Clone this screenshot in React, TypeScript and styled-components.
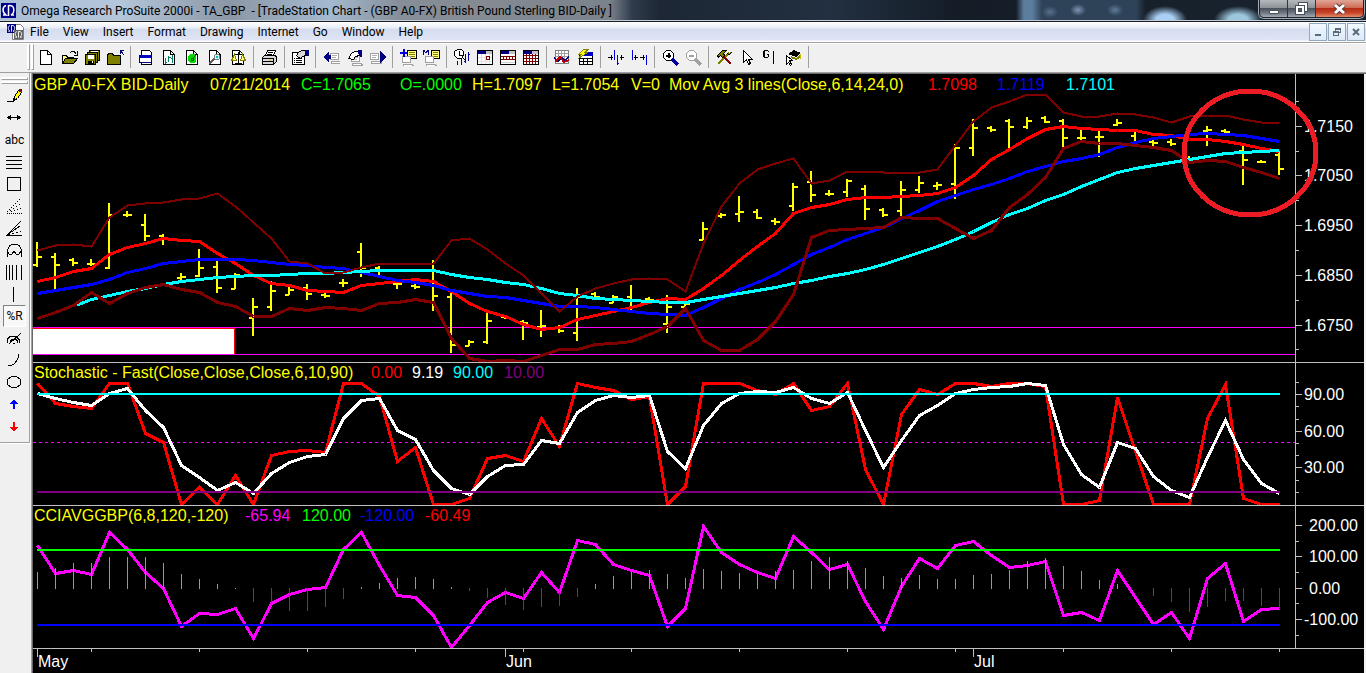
import React from "react";
import styled, { createGlobalStyle, css } from "styled-components";

const Global = createGlobalStyle`
  *, *::before, *::after { box-sizing: border-box; }
  body { margin: 0; background: #f0f0f0; }
`;

const UI_FONT = `Roboto, "Open Sans", sans-serif`;
const CHART_FONT = `"Liberation Sans", Arial, sans-serif`;

/* ---------- window frame ---------- */

const Frame = styled.div`
  display: flex;
  flex-direction: column;
  min-height: 100vh;
  font-family: ${UI_FONT};
  font-size: 12px;
  color: #000;
`;

const TitleBar = styled.header`
  display: flex;
  align-items: flex-start;
  height: 22px;
  padding: 0 2px 0 1px;
  border-bottom: 1px solid #1c2026;
  box-shadow: inset 0 -1px 0 #c3cbd6;
  background:
    radial-gradient(ellipse 22px 14px at 1165px 20px, #a9d0f4 40%, transparent 100%),
    radial-gradient(ellipse 24px 14px at 1238px 20px, #9cc6dc 40%, transparent 100%),
    radial-gradient(ellipse 8px 6px at 1078px 10px, #7d96b4, transparent),
    radial-gradient(ellipse 8px 6px at 1050px 12px, #56708c, transparent),
    radial-gradient(ellipse 8px 6px at 1115px 10px, #5f7a98, transparent),
    linear-gradient(90deg, transparent 1016px, #5d7d9f 1024px, #5d7d9f 1032px, #2f4358 1042px, #2f4358 1136px, transparent 1146px),
    linear-gradient(90deg, #a9bdd4 0, #b4c6da 120px, #8b97a6 230px, #a4bad0 330px, #868e98 400px, #858b93 480px, #7a828c 610px, #303c4c 632px, #1d2735 660px, #223041 830px, #141c26 960px, #1a2430 100%);
`;

const AppIcon = styled.svg`
  flex: none;
  margin: 3px 5px 0 0;
`;

const Title = styled.h1`
  flex: 1;
  margin: 0;
  font-size: 12px;
  font-weight: 400;
  line-height: 22px;
  white-space: pre;
  overflow: hidden;
`;

const WindowButtons = styled.div`
  display: flex;
  flex: none;
  height: 18px;
  border: 1px solid #20252c;
  border-top: 0;
  border-radius: 0 0 5px 5px;
  box-shadow: 0 0 0 1px rgba(220, 228, 236, 0.7);
  overflow: hidden;
`;

const WindowButton = styled.button<{ $close?: boolean }>`
  display: flex;
  align-items: center;
  justify-content: center;
  width: ${(p) => (p.$close ? 47 : 28)}px;
  padding: 0;
  border: 0;
  border-right: ${(p) => (p.$close ? "0" : "1px solid #30363e")};
  background: ${(p) =>
    p.$close
      ? "linear-gradient(#e0a697 0, #cf6b56 45%, #b32b13 50%, #c8452a 75%, #e48a6a 100%)"
      : "linear-gradient(#b5b9be 0, #8d939a 45%, #4b535d 50%, #6d7681 75%, #a3acb5 100%)"};
`;

const MenuBar = styled.nav`
  display: flex;
  align-items: center;
  height: 21px;
  padding: 0 1px 0 7px;
  border-bottom: 1px solid #a0a0a0;
  background: linear-gradient(#fff 0, #e9edf6 6px, #d5dcee 7px, #dfe5f5 18px, #fff 19px);
`;

const MenuList = styled.div`
  display: flex;
  flex: 1;
  gap: 2px;
`;

const MenuItem = styled.button`
  padding: 0 6px;
  border: 0;
  background: none;
  font: inherit;
  line-height: 18px;
`;

const ChildButtons = styled.div`
  display: flex;
  gap: 1px;
`;

const ChildButton = styled.button`
  display: flex;
  align-items: center;
  justify-content: center;
  width: 18px;
  height: 18px;
  padding: 0;
  border: 1px solid #93a8bd;
  background: linear-gradient(#f2f9ff, #dbe9f7);
`;

/* ---------- tool bars ---------- */

const ToolBar = styled.div`
  display: flex;
  align-items: center;
  height: 29px;
  padding: 0 0 2px 27px;
  border-top: 1px solid #fff;
  background: #f0f0f0;
`;

const grip = css`
  content: "";
  background: #fff;
  border: 1px solid #fff;
  border-right-color: #a0a0a0;
  border-bottom-color: #a0a0a0;
`;

const Grip = styled.div<{ $flat?: boolean }>`
  display: flex;
  flex: none;
  flex-direction: ${(p) => (p.$flat ? "column" : "row")};
  gap: 1px;
  width: ${(p) => (p.$flat ? 27 : 8)}px;
  height: ${(p) => (p.$flat ? 7 : 26)}px;
  &::before,
  &::after {
    ${grip}
    width: ${(p) => (p.$flat ? "27px" : "3px")};
    height: ${(p) => (p.$flat ? "3px" : "26px")};
  }
`;

const ToolGroup = styled.div`
  display: flex;
  align-items: center;
  height: 22px;
  margin-right: 4px;
  padding-right: 3px;
  border-right: 1px solid #a0a0a0;
`;

const ToolButton = styled.button`
  display: flex;
  align-items: center;
  justify-content: center;
  width: 23px;
  height: 22px;
  padding: 0;
  border: 0;
  background: none;
`;

const Body = styled.div`
  display: flex;
  flex: 1;
  border-top: 1px solid #a0a0a0;
`;

const Side = styled.aside`
  flex: none;
  width: 32px;
  border-right: 1px solid #a0a0a0;
`;

const SideTools = styled.div`
  display: flex;
  flex-direction: column;
  margin-right: 1px;
  padding: 4px 1px 5px;
  border-right: 1px solid #a0a0a0;
  border-bottom: 1px solid #a0a0a0;
  box-shadow: 1px 1px 0 #fff;
`;

const SideButton = styled.button<{ $pressed?: boolean }>`
  display: flex;
  align-items: center;
  justify-content: center;
  width: 23px;
  height: 22px;
  margin-left: 2px;
  padding: 0;
  border: 1px solid transparent;
  background: none;
  font-family: ${UI_FONT};
  font-size: 12px;
  line-height: 12px;
  ${(p) =>
    p.$pressed &&
    css`
      border-color: #808080 #fff #fff #808080;
      background: #f8f8f8;
    `}
`;

const SideList = styled.div`
  display: flex;
  flex-direction: column;
  margin-top: 1px;
`;

/* ---------- chart ---------- */

const Chart = styled.main`
  flex: 1;
  min-width: 0;
  border: 1px solid #696969;
  border-width: 1px 0 0 1px;
  background: #000;
  box-shadow: inset -2px 0 0 #f4f4f4;
  padding-right: 2px;
  font-family: ${CHART_FONT};
  font-size: 16px;
`;

const Panel = styled.section<{ $height: number }>`
  position: relative;
  display: grid;
  grid-template-columns: minmax(0, 1fr) 69px;
  height: ${(p) => p.$height}px;
  border-bottom: 1px solid #c0c0c0;
`;

const Plot = styled.svg`
  grid-area: 1 / 1;
  display: block;
  width: 100%;
  height: 100%;
  shape-rendering: crispEdges;
  polyline, path, line { vector-effect: non-scaling-stroke; }
`;

const Axis = styled.svg`
  grid-area: 1 / 2;
  display: block;
  width: 69px;
  height: 100%;
  text { fill: #fff; }
  path { stroke: #c0c0c0; fill: none; shape-rendering: crispEdges; }
`;

const Legend = styled.div<{ $columns: string; $tall?: boolean }>`
  grid-area: 1 / 1;
  z-index: 1;
  display: grid;
  grid-template-columns: ${(p) => p.$columns};
  align-self: start;
  padding-left: 1px;
  line-height: ${(p) => (p.$tall ? 22 : 20)}px;
  white-space: nowrap;
`;

const LegendItem = styled.span<{ $color: string }>`
  color: ${(p) => p.$color};
`;

const Marker = styled.svg`
  position: absolute;
  top: 13px;
  right: 45px;
  z-index: 2;
`;

const TimePanel = styled.div`
  display: grid;
  grid-template-columns: minmax(0, 1fr) 69px;
`;

const TimeAxis = styled.div`
  position: relative;
  height: 24px;
`;

const TimeTicks = styled.svg`
  position: absolute;
  inset: 0;
  width: 100%;
  height: 24px;
  shape-rendering: crispEdges;
`;

const Months = styled.div`
  display: grid;
  grid-template-columns: 468fr 468fr 321fr;
  padding: 2px 0 0 5px;
  color: #fff;
  line-height: 22px;
`;

/* ---------- data ---------- */

const STEP = 18;
const FIRST = 37;
const barX = (i: number) => FIRST + STEP * i;
const points = (ys: number[], start = 0) =>
  ys.map((y, i) => `${barX(i + start) + 0.5},${y + 0.5}`).join(" ");

const upper = [250,245,244,246,217,205,203,202,199,198,193,206,222,238,261,263,273,272,267,263,263,263,263,240,238,249,263,275,293,311,296,288,283,279,278,279,291,243,206,183,169,163,158,183,180,171,171,172,172,172,169,145,121,107,101,94,94,112,116,116,113,114,117,122,116,115,115,119,122,123];
const lower = [318,312,305,292,303,293,287,284,289,292,302,306,316,316,308,310,307,308,310,303,302,299,302,338,358,361,360,361,355,349,349,344,343,341,334,326,308,340,350,350,339,321,294,237,230,229,228,227,217,218,218,228,238,230,207,194,177,148,141,143,143,145,147,150,162,160,161,167,172,178];
const fast = [281,277,271,268,254,247,243,238,240,241,253,263,275,283,285,290,291,292,285,283,281,279,281,291,303,311,316,324,329,327,319,315,311,307,302,298,299,288,275,260,246,233,213,207,204,199,197,197,196,195,193,187,175,159,149,138,129,126,128,129,130,130,134,135,139,139,141,144,148,151];
const medium = [293,290,287,284,279,272,268,263,261,259,259,259,260,262,264,265,267,268,272,276,280,282,285,290,293,296,297,300,303,306,306,307,309,311,313,314,315,307,298,289,282,274,264,254,247,239,233,227,218,210,201,195,189,184,178,171,166,161,158,154,147,142,138,136,134,133,134,135,138,141];
const slow = [299,295,291,288,284,281,279,277,276,275,275,274,273,273,272,271,270,270,270,270,274,277,279,282,284,288,293,295,298,299,300,301,302,302,299,296,293,290,287,283,280,276,273,269,264,258,252,246,239,231,222,214,208,200,194,186,179,172,168,165,162,159,156,153,152,151,150];

/* high, low, open, close */
const bars: [number, number, number, number][] = [
  [242,267,264,256],[253,289,256,264],[258,266,259,262],[259,266,263,263],[203,269,267,214],[211,217,214,214],[214,241,224,235],[234,245,235,237],
  [273,280,277,276],[249,277,275,267],[260,293,266,287],[273,289,288,274],[298,336,317,306],[281,311,306,290],[287,295,294,289],[284,300,287,293],
  [291,298,294,295],[279,287,282,282],[243,277,251,267],[266,275,267,270],[282,289,283,283],[283,289,285,286],[260,311,263,295],[293,353,296,344],
  [340,346,345,341],[312,344,341,320],[315,319,316,317],[320,340,321,322],[310,337,326,325],[325,333,326,330],[288,341,332,296],[292,297,293,296],
  [295,303,302,296],[285,310,296,299],[297,301,298,299],[295,333,323,306],[302,307,306,303],[222,240,239,228],[213,218,215,214],[196,222,213,211],
  [209,219,211,217],[218,225,220,221],[183,211,205,186],[171,202,181,194],[190,196,193,193],[179,197,191,180],[185,220,188,208],[208,217,209,214],
  [181,217,210,189],[176,193,189,182],[182,190,185,184],[144,199,183,147],[119,156,147,127],[126,132,127,129],[119,149,120,126],[117,129,126,120],
  [116,123,117,121],[119,148,120,137],[130,141,137,137],[130,157,136,136],[119,126,124,122],[129,141,135,130],[140,147,141,142],[139,146,141,143],
  [156,163,160,158],[126,146,130,129],[129,133,130,131],[145,185,150,159],[160,163,161,161],[152,175,154,168],
];
const barPath = bars
  .map(([h, l, o, c], i) => {
    const x = barX(i);
    return `M${x} ${h}V${l}M${x - 4} ${o}.5H${x}M${x} ${c}.5H${x + 5}`;
  })
  .join("");

const stochFast = [383,403,406,408,383,383,433,442,504,487,504,475,504,455,451,450,452,383,383,396,461,447,504,504,498,458,455,461,418,446,383,387,390,399,396,504,486,383,383,383,390,394,383,410,406,383,469,504,414,389,394,383,383,386,383,383,386,504,504,500,397,451,504,504,504,418,384,498,504,504];
const stochSlow = [393,398,402,405,393,388,410,427,465,477,490,482,493,473,462,456,454,418,400,398,430,439,470,488,494,476,465,464,440,443,412,400,395,397,395,451,468,425,403,393,391,392,387,398,403,392,430,467,440,415,405,393,389,387,386,383,385,444,474,487,442,448,476,490,497,457,420,459,483,493];
const cci = [545,573,570,574,532,549,572,588,626,613,614,608,638,603,594,589,587,549,532,565,595,597,615,647,625,602,592,598,572,592,540,544,564,570,575,626,608,526,552,564,572,578,536,552,569,564,601,629,586,558,568,545,541,555,567,565,561,615,612,620,570,597,624,612,638,578,563,621,609,608];
const histogram = [572,568,563,563,557,557,557,563,574,579,584,588,601,605,610,610,606,598,587,583,578,577,579,587,590,597,604,609,606,605,596,584,576,572,570,574,578,569,571,573,574,571,570,561,557,561,568,576,578,575,579,579,575,574,570,561,558,566,571,580,584,0,595,601,611,606,600,600,605,607];
const histPath = (up: boolean) =>
  histogram
    .map((y, i) => {
      if (!y || y <= 588 !== up) return "";
      return up ? `M${barX(i)}.5 ${y}V589` : `M${barX(i)}.5 588V${y + 1}`;
    })
    .join("");

type Scale = { y: number; text: string; x?: number }[];

const ScaleAxis = ({ top, height, major, minor }: { top: number; height: number; major: Scale; minor: number[] }) => (
  <Axis viewBox={`0 ${top} 69 ${height}`}>
    <path
      d={
        `M.5 ${top}v${height}` +
        major.map((m) => `M1 ${m.y}.5h6`).join("") +
        minor.map((y) => `M1 ${y}.5h3`).join("")
      }
    />
    {major.map((m) => (
      <text key={m.text} x={m.x ?? 9} y={m.y + 6}>
        {m.text}
      </text>
    ))}
  </Axis>
);

const YELLOW = "#ffff00";

/* ---------- icons ---------- */

type Shape = { d: string; s?: string; f?: string; w?: number };

const Icon = ({ shapes, smooth }: { shapes: Shape[]; smooth?: boolean }) => (
  <svg width="17" height="17" viewBox="0 0 17 17" shapeRendering={smooth ? "auto" : "crispEdges"} aria-hidden="true">
    {shapes.map((p, i) => (
      <path key={i} d={p.d} stroke={p.s ?? "none"} fill={p.f ?? "none"} strokeWidth={p.w ?? 1} />
    ))}
  </svg>
);

const K = "#000";
const NAVY = "#000080";
const OLIVE = "#808000";
const page: Shape = { d: "M2.5 1.5h7l4 4v10h-11zM9.5 1.5v4h4", s: K, f: "#fff" };
const terminal = (x: number, y: number): Shape[] => [
  { d: `M${x}.5 ${y}.5h8v6h-8zM${x + 1}.5 ${y + 8}.5h9l1 2h-10z`, s: "#a0a0a0", f: "#fff" },
  { d: `M${x + 2} ${y + 2}.5h5M${x + 2} ${y + 4}.5h4`, s: "#b0b0b0" },
];
const calendar: Shape[] = [
  { d: "M.5 1.5h15v14h-15z", s: K, f: "#fff" },
  { d: "M1 2h14v3h-14z", f: "#c0c0c0" },
  { d: "M1 2h8v3h-8z", f: NAVY },
];
const lens = (c: string): Shape[] => [
  { d: "M4.5 1.5h4l3 3v4l-3 3h-4l-3-3v-4z", s: c, f: "#fff" },
  { d: "M4 6.5h5", s: c, w: 2 },
];
const hand: Shape[] = [
  { d: "M.5 3.5h12v12h-12z", s: K, f: "#fff" },
  { d: "M2 9.5h1m1 0h6M2 11.5h1m1 0h6M2 13.5h1m1 0h6", s: K },
  { d: "M4.5 6.5l2-3 3-2h4l1 5-4 1-2 2-3-2z", s: K, f: "#d8d8d8" },
  { d: "M13 1h4v6h-2v-1h-2z", f: NAVY },
];

const icons: Record<string, Shape[]> = {
  New: [page],
  Open: [
    { d: "M1.5 14.5v-8h4l1 2h6v3", s: K, f: "#ffff80" },
    { d: "M1.5 14.5l3-5h12l-4 5z", s: K, f: OLIVE },
    { d: "M9 3.5l2-1h2l2 2M16.5 2v4h-4", s: K },
  ],
  "Save all": [
    { d: "M5.5 1.5h10v10h-10z", s: K, f: OLIVE },
    { d: "M3.5 3.5h10v10h-10z", s: K, f: OLIVE },
    { d: "M1.5 5.5h10v10h-10z", s: K, f: OLIVE },
    { d: "M4 6h6v4H4zM7 2h7v1H7z", f: "#fff" },
    { d: "M4 12h6v3H4z", f: K },
    { d: "M8 12h1v2H8z", f: "#fff" },
  ],
  "Close workspace": [
    { d: "M.5 6.5l1-2h4l1 2h7v9H.5z", s: K, f: OLIVE },
    { d: "M13 1.5h4M13.5 1v4M13 1l4 5", s: NAVY },
  ],
  "New window": [
    { ...page, d: "M3.5 1.5h8l2 2v12h-10z" },
    { d: "M1.5 6.5h12v7h-12z", s: NAVY, f: "#fff" },
    { d: "M1 6h13v3H1z", f: "#0000c0" },
  ],
  "Chart analysis": [page, { d: "M4.5 9v6M4.5 13.5h1M7.5 7v6M7.5 8.5h2M11.5 6v8M10 9.5h2", s: "#008060" }],
  RadarScreen: [page, { d: "M6 5h4l2 2v5l-2 2H6l-2-2V7z", f: "#00d800" }, { d: "M8 10l4-4M7 9h2v2H7z", s: "#006000" }],
  "Option station": [
    page,
    { d: "M8.5 5.5h3l1 1v3l-1 1h-3l-1-1v-3z", s: "#808080", f: "#c0ffff" },
    { d: "M7 10l-5 5", s: "#606060", w: 2 },
    { d: "M9 7h2v2H9z", f: "#00c0c0" },
  ],
  "Strategy testing": [page, { d: "M8.5 3v11M5 14.5h7M4 5.5h9", s: K }, { d: "M4.5 5.5l-3 6h5zM12.5 5.5l-2 6h5z", s: OLIVE, f: "#ffff80" }],
  Print: [
    { d: "M4.5 6.5l2-5h8l-2 5z", s: K, f: "#fff" },
    { d: "M1.5 8.5l2-2h11l1 2v4l-3 3h-11z", s: K, f: "#d8d8d8" },
    { d: "M1 9.5h12M2 12.5h10M7 3.5h5M6 5.5h5M12.5 10v5", s: K },
    { d: "M8 11h2v1H8z", f: "#e0c000" },
  ],
  Format: hand,
  Previous: [...terminal(7, 4), { d: "M0 8l6-6v4h2v4H6v4z", f: NAVY }],
  "Format page": [
    ...terminal(5, 6),
    { d: "M2.5 9.5l3-5 3-2h4l1 4-4 1-2 3z", s: K, f: "#fff" },
    { d: "M12 1h4v7h-2v-3h-2z", f: NAVY },
  ],
  Next: [...terminal(1, 4), { d: "M17 8l-6-6v12z", f: NAVY }],
  "Insert symbol": [
    { d: "M7.5 1.5h9v8h-9z", s: K, f: "#ffff80" },
    { d: "M9 3.5h6M9 5.5h6M9 7.5h6", s: OLIVE },
    ...terminal(2, 7).slice(0, 1),
    { d: "M0 3h7v2H0zM3 0h2v8H3z", f: "#0000e0" },
  ],
  "Insert macro": [
    { d: "M8.5 1.5h8v8h-8z", s: K, f: "#ffff80" },
    { d: "M10 3.5h5M10 5.5h5M10 7.5h5", s: OLIVE },
    ...terminal(2, 7).slice(0, 1),
    { d: "M.5 6V1M.5 1l2.5 3 2-3M5.5 6V1", s: NAVY },
  ],
  "Time frame": [
    { d: "M3.5 .5h4l2 2v4l-2 3h-4l-3-3v-4z", s: K, f: "#fff" },
    { d: "M5.5 2v4h3M9 9l2 2", s: K },
    { d: "M3.5 12v4M7.5 10v6M11.5 5v9M14.5 3v9M10 12.5h2M14 5.5h2", s: "#0000a0" },
  ],
  Daily: [...calendar, { d: "M1 8.5h14M1 12.5h14M4.5 5v10M8.5 5v10M12.500 5v10", s: "#e0e0e0" }, { d: "M9.5 7.5h3v3h-3z", s: "#800000", f: "#fff" }],
  Weekly: [...calendar, { d: "M1 13.5h14", s: "#d0d0d0" }, { d: "M1 7.5h14M1 10.5h14M3.5 7v3M6.5 7v3M9.5 7v3M12.5 7v3", s: "#800000" }],
  Monthly: [...calendar, { d: "M1 6.5h14M1 9.5h14M1 12.5h14M3.5 5v10M6.5 5v10M9.5 5v10M12.5 5v10", s: "#800000" }],
  "Insert indicator": [
    { d: "M1.5 1.5h13v13h-13z", s: "#808080", f: "#fff" },
    { d: "M4.5 2v8M7.5 2v8M10.5 2v8M2 4.5h12M2 7.5h12", s: "#a0a0a0" },
    { d: "M0 8.500l4 4 4-4 3 3 4-4", s: NAVY, w: 2 },
    { d: "M1 13l5-5 4 5 5-2", s: "#c00000", w: 2 },
  ],
  "Insert strategy": [
    { d: "M2.5 6.5h13v9h-13z", s: K, f: "#fff" },
    { d: "M3 9.5h12M3 12.5h12M6.5 9v6M10.5 9v6", s: K },
    { d: "M7 3h9v4H7z", f: "#0000c0" },
    { d: "M6.5 .5h5l-4 3h3l-9 6 3-4h-3z", s: OLIVE, f: "#ffff00" },
  ],
  "Decrease spacing": [{ d: "M6.5 1v10M9.5 6v10M9 14.5h2", s: "#0000e0" }, { d: "M0 8.5h5M3.5 6v5M12 8.5h4M13.5 6v5", s: K }],
  "Increase spacing": [{ d: "M1.5 1v10M15.5 6v10", s: "#0000e0" }, { d: "M3 8.5h4M4.5 6v5M9 8.5h5M12.5 6v5", s: K }],
  "Zoom in": [...lens(K), { d: "M6.5 4v5", s: K, w: 2 }, { d: "M10 10l6 6", s: "#0000a0", w: 3 }],
  "Zoom out": [...lens("#a0a0a0"), { d: "M10 10l6 6", s: "#a0a0a0", w: 3 }],
  PowerEditor: [
    { d: "M2 15L13 4", s: OLIVE, w: 2 },
    { d: "M8 8l7 7", s: "#800000", w: 2 },
    { d: "M1.5 6.500l5-5h4l-3 3 1 2-2 2-2-2-2 2zM11 4l2 2 3-3", s: K, f: OLIVE },
  ],
  Pointer: [{ d: "M4.5 1.5v12l3-3 2 5 2-1-2-4h4z", s: K, f: "#fff" }],
  Global: [{ d: "M7 2.5L5.5 1.5h-3l-1 1v5l1 1h3l1-1v-2h-2M2.500 2v6M11.500 2v13", s: K }],
  Learning: [
    { d: "M3 5l6-4 7 3-5 4z", f: K },
    { d: "M6 7l5 2 4-3v3l-4 2-5-2z", f: OLIVE },
    { d: "M15.5 5v5", s: "#c0c000" },
    { d: "M1.5 6.5v9l2-2 2 3 1-1-2-4h3z", s: K, f: "#fff" },
  ],
};

const groups: string[][] = [
  ["New", "Open", "Save all", "Close workspace"],
  ["New window", "Chart analysis", "RadarScreen", "Option station", "Strategy testing"],
  ["Print"],
  ["Format"],
  ["Previous", "Format page", "Next"],
  ["Insert symbol", "Insert macro"],
  ["Time frame", "Daily", "Weekly", "Monthly"],
  ["Insert indicator", "Insert strategy"],
  ["Decrease spacing", "Increase spacing"],
  ["Zoom in", "Zoom out"],
  ["PowerEditor", "Pointer", "Global", "Learning"],
];

const sideTools: { name: string; shapes?: Shape[]; text?: string; pressed?: boolean }[] = [
  {
    name: "Draw",
    shapes: [
      { d: "M7.5 12.5l1-4 4-6h3v2l-4 6z", s: K, f: "#ffff00" },
      { d: "M13 1h3v3h-3z", f: "#800000" },
      { d: "M1 13.5h6l2-2", s: K },
    ],
  },
  { name: "Horizontal extension", shapes: [{ d: "M2 7.5h12", s: K, w: 1 }, { d: "M1 7.5l4-3v6zM15 7.5l-4-3v6z", f: K }] },
  { name: "Text", text: "abc" },
  { name: "Retracement", shapes: [{ d: "M0 2.5h16M0 6.5h16M0 10.5h16M0 14.5h16", s: K }] },
  { name: "Rectangle", shapes: [{ d: "M1.5 1.5h13v13h-13z", s: K }] },
  {
    name: "Speed lines",
    shapes: [
      { d: "M1 13.5h1M3 11.5h1M5 9.5h1M7 7.5h1M9 5.5h1M11 3.5h1M13 1.5h1M4 12.5h1M7 10.5h1M10 8.5h1M13 6.5h1M5 13.5h1M8 12.5h1M11 11.5h1M14 10.5h1", s: K },
      { d: "M1 15.5h1m1 0h1m1 0h1m1 0h1m1 0h1m1 0h1m1 0h1m1 0h1", s: K },
    ],
  },
  { name: "Fan", shapes: [{ d: "M0 15.5h16M1 15L15 1M1 15l13-9", s: K }, { d: "M3 14.5h1m2-1h2m2-1h2m2-1h1", s: K }] },
  { name: "Cycles", shapes: [{ d: "M1.5 15V8l2-4 3-2h4l3 2 2 4v7M1 9l2 3h3l2-3 2 3h3l2-3", s: K }] },
  { name: "Time lines", shapes: [{ d: "M.5 1v15M3.5 1v15M6.5 1v15M10.5 1v15M15.5 1v15", s: K }] },
  { name: "Vertical line", shapes: [{ d: "M7.5 1v15", s: K }] },
  { name: "Percent R", text: "%R", pressed: true },
  {
    name: "Arcs",
    shapes: [{ d: "M1.5 13V9l3-3h5l4 4v3M4.5 13v-2l2-2h3l2 2v2M7 13.5h2M3 14L15 3", s: K }],
  },
  { name: "Arc", shapes: [{ d: "M2 14c6 0 10-5 11-12", s: K }] },
  { name: "Ellipse", shapes: [{ d: "M5.5 2.5h5l4 3v5l-4 3h-5l-4-3v-5z", s: K }] },
  { name: "Up arrow", shapes: [{ d: "M8 3l4 5H9v5H7V8H4z", f: "#0000ff" }] },
  { name: "Down arrow", shapes: [{ d: "M8 14L4 9h3V4h2v5h3z", f: "#ff0000" }] },
];

/* ---------- page ---------- */

const OmegaMark = ({ x = 0, y = 0, s = 15, bg = "#00008b" }) => (
  <g transform={`translate(${x} ${y}) scale(${s / 15})`}>
    <path d="M0 0h15v15H0z" fill={bg} />
    <path d="M5 2.500C1 4 1 9 5 12H2M8 2.500c6-1 6 7.500 2 9.500h3M7.500 2v11" stroke="#fff" strokeWidth="1.500" fill="none" />
  </g>
);

export default function App() {
  return (
    <Frame>
      <Global />
      <TitleBar>
        <AppIcon width="15" height="15" aria-hidden="true">
          <OmegaMark />
        </AppIcon>
        <Title>{"Omega Research ProSuite 2000i - TA_GBP  - [TradeStation Chart - (GBP A0-FX) British Pound Sterling BID-Daily ]"}</Title>
        <WindowButtons>
          <WindowButton aria-label="Minimize">
            <svg width="12" height="12"><path d="M1.5 7.5h9v3h-9z" fill="#fff" stroke="#4a5058" /></svg>
          </WindowButton>
          <WindowButton aria-label="Restore">
            <svg width="13" height="13" shapeRendering="crispEdges">
              <path d="M3.5 .5h9v9h-9z" fill="#fff" stroke="#4a5058" />
              <path d="M.5 3.5h9v9h-9z" fill="#fff" stroke="#4a5058" />
              <path d="M3.5 6.5h3v3h-3z" fill="#59616c" stroke="#4a5058" />
            </svg>
          </WindowButton>
          <WindowButton $close aria-label="Close">
            <svg width="13" height="12">
              <path d="M2 2l9 8M11 2l-9 8" stroke="#5a3a3a" strokeWidth="5" />
              <path d="M2 2l9 8M11 2l-9 8" stroke="#fff" strokeWidth="3" />
            </svg>
          </WindowButton>
        </WindowButtons>
      </TitleBar>

      <MenuBar>
        <svg width="17" height="16" aria-hidden="true">
          <path d="M5.5 .5h8l3 3v12h-11z" fill="#fff" stroke="#808080" />
          <OmegaMark x={0} y={0} s={9} />
          <OmegaMark x={7} y={6} s={9} bg="#606060" />
        </svg>
        <MenuList>
          {["File", "View", "Insert", "Format", "Drawing", "Internet", "Go", "Window", "Help"].map((m) => (
            <MenuItem key={m}>{m}</MenuItem>
          ))}
        </MenuList>
        <ChildButtons>
          <ChildButton aria-label="Minimize chart">
            <svg width="10" height="10"><path d="M2 7h6v2H2z" fill="#5c6b7c" /></svg>
          </ChildButton>
          <ChildButton aria-label="Restore chart">
            <svg width="10" height="10" fill="none" stroke="#5c6b7c" shapeRendering="crispEdges">
              <path d="M3.5 4V1.5h5v4H7M3 2h6M1.5 4.5h5v4h-5zM1 5h6" />
            </svg>
          </ChildButton>
          <ChildButton aria-label="Close chart">
            <svg width="10" height="10"><path d="M2 2l6 6M8 2l-6 6" stroke="#5c6b7c" strokeWidth="2" /></svg>
          </ChildButton>
        </ChildButtons>
      </MenuBar>

      <ToolBar>
        <Grip />
        {groups.map((group, g) => (
          <ToolGroup key={g}>
            {group.map((name) => (
              <ToolButton key={name} aria-label={name}>
                <Icon shapes={icons[name]} />
              </ToolButton>
            ))}
          </ToolGroup>
        ))}
      </ToolBar>

      <Body>
        <Side>
          <SideTools>
            <Grip $flat />
            <SideList>
              {sideTools.map((t) => (
                <SideButton key={t.name} $pressed={t.pressed} aria-label={t.name}>
                  {t.text ?? <Icon shapes={t.shapes ?? []} />}
                </SideButton>
              ))}
            </SideList>
          </SideTools>
        </Side>

        <Chart>
          <Panel $height={289}>
            <Plot viewBox="33 74 1262 288" preserveAspectRatio="none" fill="none">
              <path d="M33 328h202v26h-202z" fill="#fff" />
              <path d="M33 328.5h201.5V354" stroke="#ff0000" />
              <path d="M33 327.5h1262M33 354.5h1262" stroke="#ff00ff" />
              <path d={barPath} stroke={YELLOW} strokeWidth="2" />
              <polyline points={points(fast)} stroke="#ff0000" strokeWidth="3" />
              <polyline points={points(medium)} stroke="#0000ff" strokeWidth="3" />
              <polyline points={`77,305 ${points(slow, 3)}`} stroke="#00ffff" strokeWidth="3" />
              <polyline points={points(upper)} stroke="#800000" strokeWidth="2" />
              <polyline points={points(lower)} stroke="#800000" strokeWidth="3" />
            </Plot>
            <Legend $tall $columns="176px 91px 99px 72px 80px 79px 38px 259px 69px 69px 1fr">
              <LegendItem $color={YELLOW}>GBP A0-FX BID-Daily</LegendItem>
              <LegendItem $color={YELLOW}>07/21/2014</LegendItem>
              <LegendItem $color="#00ff00">C=1.7065</LegendItem>
              <LegendItem $color="#00ff00">O=.0000</LegendItem>
              <LegendItem $color={YELLOW}>H=1.7097</LegendItem>
              <LegendItem $color={YELLOW}>L=1.7054</LegendItem>
              <LegendItem $color={YELLOW}>V=0</LegendItem>
              <LegendItem $color={YELLOW}>Mov Avg 3 lines(Close,6,14,24,0)</LegendItem>
              <LegendItem $color="#ff0000">1.7098</LegendItem>
              <LegendItem $color="#0000ff">1.7119</LegendItem>
              <LegendItem $color="#00ffff">1.7101</LegendItem>
            </Legend>
            <ScaleAxis
              top={74}
              height={288}
              major={[
                { y: 126, text: "1.7150" },
                { y: 175, text: "1.7050" },
                { y: 225, text: "1.6950" },
                { y: 275, text: "1.6850" },
                { y: 325, text: "1.6750" },
              ]}
              minor={[101, 151, 200, 250, 300, 349]}
            />
            <Marker width="138" height="132" shapeRendering="crispEdges">
              <ellipse cx="69" cy="66" rx="66" ry="62" fill="none" stroke="#ed1c24" strokeWidth="5" />
            </Marker>
          </Panel>

          <Panel $height={143}>
            <Plot viewBox="33 363 1262 142" preserveAspectRatio="none" fill="none">
              <path d="M33 442.5h1262" stroke="#ff00ff" strokeDasharray="3 3" />
              <polyline points={points(stochFast)} stroke="#ff0000" strokeWidth="3" />
              <polyline points={points(stochSlow)} stroke="#ffffff" strokeWidth="3" />
              <path d="M37 394H1280" stroke="#00ffff" strokeWidth="2" />
              <path d="M37 492H1280" stroke="#800080" strokeWidth="2" />
            </Plot>
            <Legend $columns="337px 41px 41px 51px 1fr">
              <LegendItem $color={YELLOW}>Stochastic - Fast(Close,Close,Close,6,10,90)</LegendItem>
              <LegendItem $color="#ff0000">0.00</LegendItem>
              <LegendItem $color="#ffffff">9.19</LegendItem>
              <LegendItem $color="#00ffff">90.00</LegendItem>
              <LegendItem $color="#800080">10.00</LegendItem>
            </Legend>
            <ScaleAxis
              top={363}
              height={142}
              major={[
                { y: 394, text: "90.00" },
                { y: 431, text: "60.00" },
                { y: 467, text: "30.00" },
              ]}
              minor={[382, 406, 419, 443, 455, 480, 492]}
            />
          </Panel>

          <Panel $height={143}>
            <Plot viewBox="33 506 1262 142" preserveAspectRatio="none" fill="none">
              <polyline points={points(cci)} stroke="#ff00ff" strokeWidth="3" />
              <path d="M37 550H1280" stroke="#00ff00" strokeWidth="2" />
              <path d="M37 625H1280" stroke="#0000ff" strokeWidth="2" />
              <path d={histPath(true)} stroke="#00ff00" />
              <path d={histPath(false)} stroke="#ff0000" />
            </Plot>
            <Legend $columns="211px 57px 58px 65px 1fr">
              <LegendItem $color={YELLOW}>CCIAVGGBP(6,8,120,-120)</LegendItem>
              <LegendItem $color="#ff00ff">-65.94</LegendItem>
              <LegendItem $color="#00ff00">120.00</LegendItem>
              <LegendItem $color="#0000ff">-120.00</LegendItem>
              <LegendItem $color="#ff0000">-60.49</LegendItem>
            </Legend>
            <ScaleAxis
              top={506}
              height={142}
              major={[
                { y: 525, text: "200.00", x: 14 },
                { y: 556, text: "100.00", x: 14 },
                { y: 588, text: "0.00", x: 14 },
                { y: 619, text: "-100.00" },
              ]}
              minor={[541, 572, 603, 635]}
            />
          </Panel>

          <TimePanel>
            <TimeAxis>
              <TimeTicks viewBox="33 0 1262 24" preserveAspectRatio="none">
                <path
                  d={
                    [37, 505, 973].map((x) => `M${x}.5 0v8`).join("") +
                    [91, 199, 307, 415, 523, 631, 739, 847, 955, 1063, 1171, 1279].map((x) => `M${x}.5 0v3`).join("")
                  }
                  stroke="#c0c0c0"
                />
              </TimeTicks>
              <Months>
                <span>May</span>
                <span>Jun</span>
                <span>Jul</span>
              </Months>
            </TimeAxis>
          </TimePanel>
        </Chart>
      </Body>
    </Frame>
  );
}
